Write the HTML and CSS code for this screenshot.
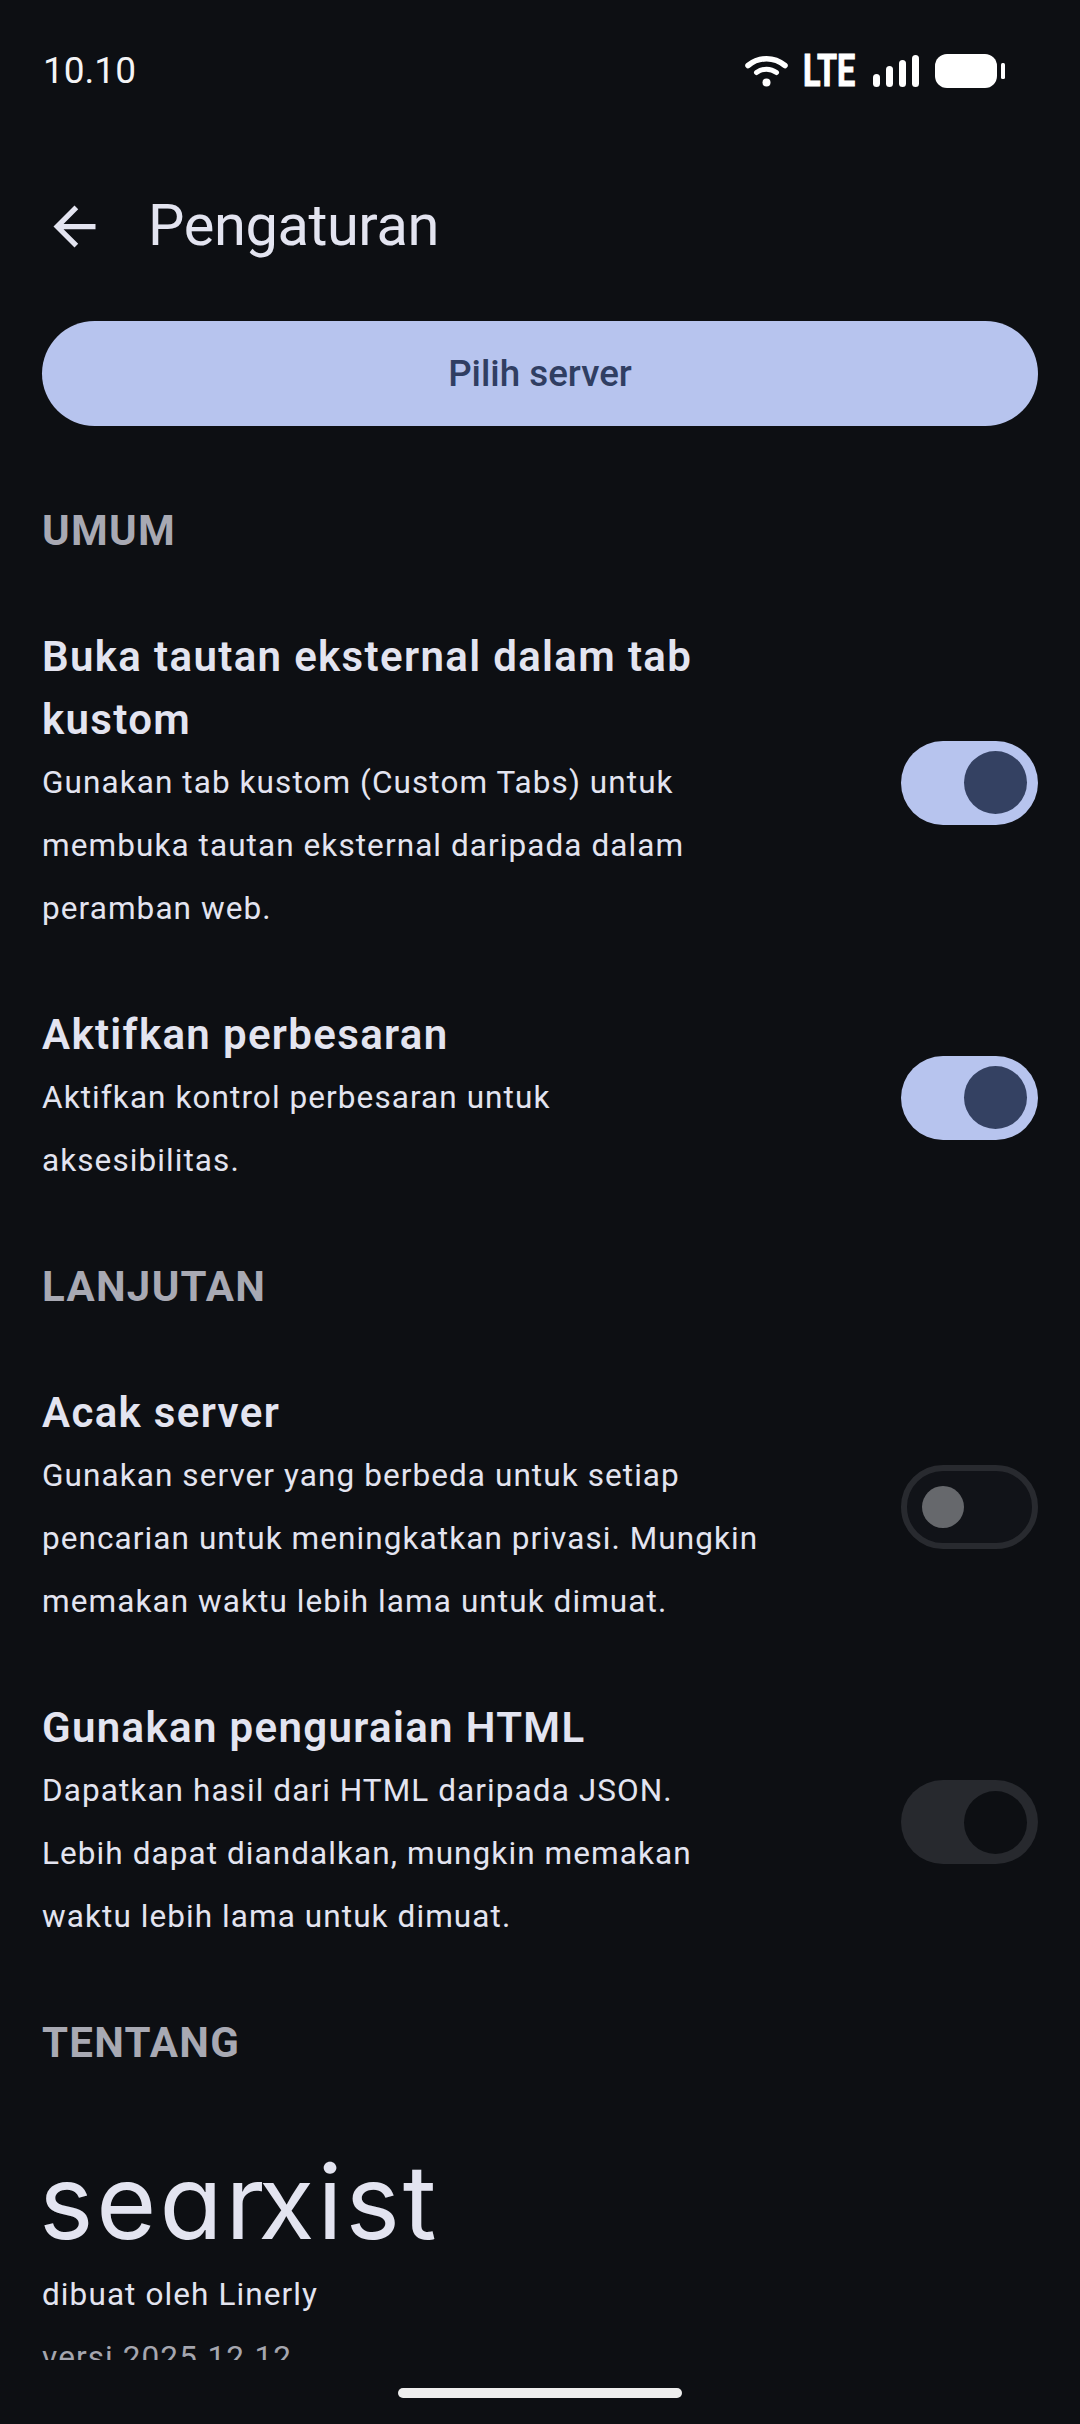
FILE: index.html
```html
<!DOCTYPE html>
<html lang="id">
<head>
  <meta charset="UTF-8" />
  <meta name="viewport" content="width=device-width, initial-scale=1.0" />
  <title>Pengaturan</title>
  <link rel="stylesheet" href="styles.css">
</head>
<body>
  <div class="statusbar">
    <span class="jam">10.10</span>
    <div class="status-ikon">
      <svg class="wifi" width="43" height="32" viewBox="0 0 43 32" fill="none" stroke="#fff" stroke-linecap="round">
        <path d="M3 10.5C14 1.5 29 1.5 40 10.5" stroke-width="5.5"/>
        <path d="M11.5 17.5C17.5 13 25.5 13 31.5 17.5" stroke-width="5"/>
        <circle cx="21.5" cy="27.5" r="4" fill="#fff" stroke="none"/>
      </svg>
      <span class="lte">LTE</span>
      <svg class="sinyal" width="46" height="32" viewBox="0 0 46 32" fill="#fff">
        <rect x="0" y="19" width="7" height="13" rx="3.5"/>
        <rect x="13" y="11" width="7" height="21" rx="3.5"/>
        <rect x="26" y="5" width="7" height="27" rx="3.5"/>
        <rect x="39" y="0" width="7" height="32" rx="3.5"/>
      </svg>
      <svg class="baterai" width="71" height="34" viewBox="0 0 71 34" fill="#fff">
        <rect x="0" y="0" width="62" height="34" rx="12"/>
        <rect x="66" y="9" width="4" height="16" rx="1.5"/>
      </svg>
    </div>
  </div>

  <div class="toolbar">
    <svg class="kembali" width="63" height="63" viewBox="0 0 24 24" fill="#e3e4f0">
      <path d="M20 11H7.83l5.59-5.59L12 4l-8 8 8 8 1.41-1.41L7.83 13H20v-2z"/>
    </svg>
    <h1>Pengaturan</h1>
  </div>

  <div class="isi">
    <button class="tombol">Pilih server</button>

    <h2>UMUM</h2>
    <div class="baris">
      <div class="teks">
        <h3>Buka tautan eksternal dalam tab<br>kustom</h3>
        <p>Gunakan tab kustom (Custom Tabs) untuk<br>membuka tautan eksternal daripada dalam<br>peramban web.</p>
      </div>
      <div class="saklar nyala"><i></i></div>
    </div>
    <div class="baris">
      <div class="teks">
        <h3>Aktifkan perbesaran</h3>
        <p>Aktifkan kontrol perbesaran untuk<br>aksesibilitas.</p>
      </div>
      <div class="saklar nyala"><i></i></div>
    </div>

    <h2>LANJUTAN</h2>
    <div class="baris">
      <div class="teks">
        <h3>Acak server</h3>
        <p>Gunakan server yang berbeda untuk setiap<br>pencarian untuk meningkatkan privasi. Mungkin<br>memakan waktu lebih lama untuk dimuat.</p>
      </div>
      <div class="saklar mati"><i></i></div>
    </div>
    <div class="baris">
      <div class="teks">
        <h3>Gunakan penguraian HTML</h3>
        <p>Dapatkan hasil dari HTML daripada JSON.<br>Lebih dapat diandalkan, mungkin memakan<br>waktu lebih lama untuk dimuat.</p>
      </div>
      <div class="saklar redup"><i></i></div>
    </div>

    <h2>TENTANG</h2>
    <div class="logo">sea<span class="logo-r">r</span>xist</div>
    <p class="pembuat">dibuat oleh Linerly</p>
    <p class="versi">versi 2025.12.12</p>
  </div>

  <div class="navbar"><span></span></div>
</body>
</html>
```
FILE: styles.css
```css
* {
  box-sizing: border-box;
}
html, body {
  margin: 0;
  height: 2424px;
  overflow: hidden;
}
body {
  background: #0d0f13;
  color: #e3e4f0;
  font-family: Roboto, "Noto Sans", sans-serif;
  display: flex;
  flex-direction: column;
}
.statusbar {
  height: 140px;
  flex: none;
  display: flex;
  justify-content: space-between;
  align-items: flex-start;
  padding: 51px 74px 0 43px;
}
.jam {
  font-size: 37px;
  line-height: 40px;
  color: #f4f4f6;
}
.status-ikon {
  display: flex;
  align-items: center;
  height: 40px;
}
.wifi { margin-right: 15px; }
.lte {
  width: 54px;
  margin-right: 16px;
  font-size: 45px;
  font-weight: 700;
  line-height: 32px;
  color: #fff;
  -webkit-text-stroke: 1px #fff;
  transform: scaleX(0.72);
  transform-origin: left center;
}
.sinyal { margin-right: 16px; }
.toolbar {
  height: 173px;
  flex: none;
  display: flex;
  align-items: center;
  padding: 0 0 0 43px;
  gap: 42px;
}
.toolbar h1 {
  margin: 0;
  padding-bottom: 3px;
  font-size: 57.75px;
  font-weight: 400;
  line-height: 74px;
  letter-spacing: -0.4px;
}
.isi {
  flex: 1;
  min-height: 0;
  overflow: hidden;
  padding: 8px 42px 0;
  margin-bottom: 64px;
}
.tombol {
  display: block;
  width: 100%;
  height: 105px;
  border: 0;
  border-radius: 53px;
  background: #b7c4ee;
  color: #303e62;
  font-family: inherit;
  font-size: 36.75px;
  font-weight: 500;
}
h2 {
  margin: 73px 0 63px;
  font-size: 42px;
  font-weight: 700;
  line-height: 63px;
  letter-spacing: 1.3px;
  color: #a8a9b3;
}
.baris {
  display: flex;
  align-items: center;
  justify-content: space-between;
  margin-bottom: 63px;
}
.baris + h2 {
  margin-top: 0;
}
.teks {
  width: 770px;
}
.teks h3 {
  margin: 0;
  font-size: 42px;
  font-weight: 650;
  line-height: 63px;
  letter-spacing: 1.35px;
}
.teks p {
  margin: 0;
  font-size: 31.5px;
  line-height: 63px;
  letter-spacing: 1.08px;
}
.saklar {
  flex: none;
  width: 137px;
  height: 84px;
  border-radius: 42px;
  display: flex;
  align-items: center;
}
.saklar i {
  display: block;
  border-radius: 50%;
}
.nyala {
  background: #b7c4ee;
  justify-content: flex-end;
  padding-right: 11px;
}
.nyala i {
  width: 63px;
  height: 63px;
  background: #344162;
}
.mati {
  background: #111318;
  border: 6px solid #282a2f;
  padding-left: 15px;
}
.mati i {
  width: 42px;
  height: 42px;
  background: #66686c;
}
.redup {
  background: #27292e;
  justify-content: flex-end;
  padding-right: 11px;
}
.redup i {
  width: 63px;
  height: 63px;
  background: #0d0f13;
}
.logo {
  padding-top: 4px;
  font-family: Inter, sans-serif;
  font-feature-settings: "cv11";
  font-size: 103px;
  font-weight: 400;
  line-height: 122px;
  letter-spacing: 3px;
  margin-left: -3px;
  color: #e3e4f0;
}
.logo-r {
  letter-spacing: -6px;
}
.pembuat, .versi {
  margin: 0;
  font-size: 31.5px;
  line-height: 63px;
  letter-spacing: 1.1px;
}
.versi {
  color: #a5a6af;
}
.navbar {
  position: absolute;
  left: 0;
  right: 0;
  top: 2388px;
  display: flex;
  justify-content: center;
}
.navbar span {
  display: block;
  width: 284px;
  height: 10px;
  border-radius: 5px;
  background: #eee;
}
```
